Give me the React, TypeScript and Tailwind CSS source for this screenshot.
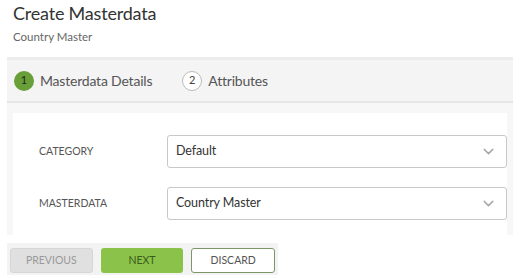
import { ChevronDown } from "lucide-react";

function SelectBox({ value }: { value: string }) {
    return (
        <div className="flex-1 h-[33px] flex items-center justify-between border border-[#c8c8c8] rounded-[3px] bg-white pl-[8px] pr-[9px]">
            <span className="text-[12.5px] text-[#333] tracking-[-0.1px]">{value}</span>
            <ChevronDown className="w-[17px] h-[17px] text-[#a8a8a8]" strokeWidth={2} />
        </div>
    );
}

export default function App() {
    return (
        <div className="w-[520px] h-[278px] bg-white pl-[7px] pr-[7px] font-['Lato','Open_Sans',sans-serif] overflow-hidden">
            <div className="pl-[6px] pt-[2px] h-[57px]">
                <h1 className="text-[18px] leading-[22px] text-[#333] tracking-[-0.2px]">Create Masterdata</h1>
                <p className="text-[11.5px] leading-[14px] text-[#666] mt-[6px]">Country Master</p>
            </div>

            <div className="h-[46px] bg-[#f4f4f4] border-t-[3px] border-[#ececec] border-b-[2px] border-b-[#e6e6e6] flex items-center pl-[7px]">
                <div className="flex items-center gap-[6px]">
                    <span className="w-[20px] h-[20px] rounded-full bg-[#689f38] text-[11px] text-[#222] flex items-center justify-center">
                        1
                    </span>
                    <span className="text-[14px] text-[#555] tracking-[-0.2px]">Masterdata Details</span>
                </div>
                <div className="flex items-center gap-[6px] ml-[30px]">
                    <span className="w-[20px] h-[20px] rounded-full border border-[#bbb] bg-white text-[11px] text-[#444] flex items-center justify-center">
                        2
                    </span>
                    <span className="text-[14px] text-[#555] tracking-[-0.2px]">Attributes</span>
                </div>
            </div>

            <div className="bg-[#f7f7f7] px-[6px] pt-[10px]">
                <div className="bg-white pl-[26px] pt-[22px] pb-[15px] flex flex-col gap-[19px]">
                    <div className="flex items-center">
                        <span className="w-[128px] text-[10.5px] text-[#555]">CATEGORY</span>
                        <SelectBox value="Default" />
                    </div>
                    <div className="flex items-center">
                        <span className="w-[128px] text-[10.5px] text-[#555]">MASTERDATA</span>
                        <SelectBox value="Country Master" />
                    </div>
                </div>
            </div>

            <div className="mt-[8px] w-[271px] h-[32px] bg-[#f3f3f3] px-[3px] pt-[5px] flex gap-[8px]">
                <button className="w-[83px] h-[25px] rounded-[3px] border border-[#d6d6d6] bg-[#e0e0e0] text-[10.5px] text-[#999]">
                    PREVIOUS
                </button>
                <button className="w-[83px] h-[25px] rounded-[3px] bg-[#8bc34a] text-[10.5px] text-[#3a5a1a]">
                    NEXT
                </button>
                <button className="w-[84px] h-[25px] rounded-[3px] border border-[#7d9668] bg-white text-[10.5px] text-[#555]">
                    DISCARD
                </button>
            </div>
        </div>
    );
}
